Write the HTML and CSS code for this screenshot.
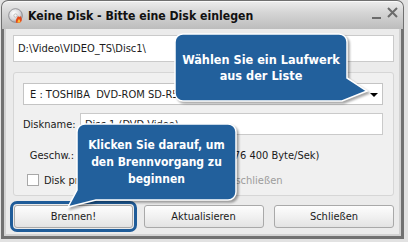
FILE: index.html
```html
<!DOCTYPE html>
<html lang="de">
<head>
<meta charset="utf-8">
<title>Keine Disk</title>
<link rel="stylesheet" href="styles.css">
</head>
<body>
<div class="window">
  <div class="titlebar">
    <svg class="app-icon" width="15" height="15" viewBox="0 0 16 16">
      <defs>
        <radialGradient id="cd" cx="0.4" cy="0.35" r="0.7">
          <stop offset="0" stop-color="#ffffff"/>
          <stop offset="0.6" stop-color="#d8d8dc"/>
          <stop offset="1" stop-color="#9a9aa0"/>
        </radialGradient>
      </defs>
      <circle cx="8" cy="8" r="7.3" fill="url(#cd)" stroke="#7d7d82" stroke-width="0.8"/>
      <circle cx="8" cy="8" r="1.8" fill="#f4f4f4" stroke="#909090" stroke-width="0.5"/>
      <path d="M8.6 15.6 C 7.6 12.8, 9.6 10.6, 10.8 8.2 C 11.3 10, 12.6 10, 12.9 8.4 C 15.4 10.6, 15.6 14.6, 12.4 15.6 Z" fill="#e4481a"/>
      <path d="M10.2 15.4 C 9.8 13.8, 11.2 12.6, 11.8 11.4 C 12.3 12.8, 13.6 13.4, 13.1 15.4 Z" fill="#ffbb33"/>
    </svg>
    <span class="title">Keine Disk - Bitte eine Disk einlegen</span>
    <div class="controls">
      <span class="minimize"></span>
      <svg class="close" width="11" height="11" viewBox="0 0 11 11">
        <path d="M1 1 L10 10 M10 1 L1 10" stroke="#6b6b6b" stroke-width="2"/>
      </svg>
    </div>
  </div>
  <div class="frame">
    <div class="field path">D:\Video\VIDEO_TS\Disc1\</div>
    <div class="group">
      <div class="combo">
        <span>E : TOSHIBA&nbsp; DVD-ROM SD-R5112 1031</span>
        <span class="arrow"></span>
      </div>
      <div class="row">
        <span class="lbl">Diskname:</span>
        <div class="field input">Disc 1 (DVD-Video)</div>
      </div>
      <div class="row speed">
        <span class="lbl">Geschw.:</span>
        <span class="speed-value">Maximal 8x (1 176 400 Byte/Sek)</span>
      </div>
      <div class="check-row">
        <span class="checkbox"></span>
        <span class="check-label">Disk prüfen<span class="disabled"> und nach dem Brennen abschließen</span></span>
      </div>
    </div>
    <div class="buttons">
      <button class="btn focused">Brennen!</button>
      <button class="btn">Aktualisieren</button>
      <button class="btn">Schließen</button>
    </div>
  </div>

  <svg class="bubble-shape bubble-shape-1" width="205" height="85" viewBox="0 0 205 85">
    <path d="M13 6 H169 A8 8 0 0 1 177 14 V50 L197 63 L172 73 H13 A8 8 0 0 1 5 65 V14 A8 8 0 0 1 13 6 Z"
          fill="#22609c" stroke="#ffffff" stroke-width="1.5"/>
  </svg>
  <div class="bubble-text bubble-text-1">Wählen Sie ein Laufwerk<br>aus der Liste</div>

  <svg class="bubble-shape bubble-shape-2" width="185" height="95" viewBox="0 0 185 95">
    <path d="M23 6 H166 A8 8 0 0 1 174 14 V74 A8 8 0 0 1 166 82 H34 L6 89 L15 72 V14 A8 8 0 0 1 23 6 Z"
          fill="#22609c" stroke="#ffffff" stroke-width="1.5"/>
  </svg>
  <div class="bubble-text bubble-text-2">Klicken Sie darauf, um<br>den Brennvorgang zu<br>beginnen</div>
</div>
</body>
</html>
```

FILE: styles.css
```css
* { box-sizing: border-box; }

body {
  margin: 0;
  background: #e2e2e2;
  font-family: "DejaVu Sans Condensed", "DejaVu Sans", sans-serif;
  font-size: 11px;
  color: #1a1a1a;
}

.window {
  position: relative;
  width: 403px;
  margin-left: 1px;
}

.titlebar {
  height: 29px;
  display: flex;
  align-items: center;
  padding: 0 0 0 6px;
  border: 1px solid #707070;
  border-bottom: none;
  border-radius: 7px 7px 0 0;
  background: linear-gradient(#ededed, #d6d6d6 40%, #bdbdbd);
  box-shadow: inset 0 1px 0 #fafafa;
}

.app-icon { display: block; margin-top: 1px; }

.title {
  margin-left: 5px;
  font-weight: bold;
  font-size: 12.2px;
  color: #111;
  flex: 1;
  padding-top: 1px;
}

.controls {
  display: flex;
  align-items: center;
  gap: 6px;
  padding-right: 5px;
  margin-top: -1px;
}

.minimize {
  display: block;
  width: 9px;
  height: 2px;
  background: #6b6b6b;
  margin-top: 6px;
}

.close { display: block; margin-top: -5px; }

.frame {
  height: 210px;
  border: 3px solid #717171;
  border-top: none;
  background: #ebebeb;
  box-shadow: inset 2px 0 0 #d2d2d2, inset -2px 0 0 #d2d2d2, inset 0 -2px 0 #d2d2d2;
  padding: 6px 7px 0 9px;
}

.field {
  background: #fff;
  border: 1px solid #cacaca;
  display: flex;
  align-items: center;
  white-space: nowrap;
  overflow: hidden;
}

.path {
  height: 27px;
  padding-left: 4px;
}

.group {
  margin-top: 10px;
  border: 1px solid #d6d6d6;
  border-radius: 3px;
  background: #f0f0f0;
  padding: 10px 10px 7px 9px;
  height: 124px;
}

.combo {
  height: 22px;
  background: #fff;
  border: 1px solid #c4c4c4;
  display: flex;
  align-items: center;
  justify-content: space-between;
  padding: 0 4px 0 6px;
  white-space: nowrap;
}

.arrow {
  width: 0;
  height: 0;
  border-left: 4px solid transparent;
  border-right: 4px solid transparent;
  border-top: 4px solid #000;
  margin-top: 1px;
}

.row {
  display: flex;
  align-items: center;
  margin-top: 8px;
  gap: 6px;
}

.lbl {
  width: 51px;
  text-align: right;
  white-space: nowrap;
}

.input {
  height: 22px;
  flex: 1;
  padding-left: 4px;
}

.speed {
  margin-top: 12px;
  height: 16px;
}

.speed-value { white-space: nowrap; margin-left: 74px; }

.check-row {
  display: flex;
  align-items: center;
  margin-top: 9px;
  height: 16px;
  padding-left: 4px;
  gap: 5px;
  white-space: nowrap;
}

.checkbox {
  width: 12px;
  height: 12px;
  border: 1px solid #a8a8a8;
  background: #fff;
}

.disabled { color: #9c9c9c; }

.buttons {
  display: flex;
  justify-content: space-between;
  margin-top: 9px;
  padding: 0 0 0 1px;
}

.btn {
  width: 120px;
  height: 23px;
  font-family: inherit;
  font-size: 11px;
  color: #1a1a1a;
  border: 1px solid #a9a9a9;
  border-radius: 3px;
  background: linear-gradient(#fdfdfd, #f1f1f1 50%, #e3e3e3);
  padding: 0;
}

.focused {
  width: 119px;
  outline: 3px solid #1f5c99;
  outline-offset: 1px;
}

.bubble-shape {
  position: absolute;
  filter: drop-shadow(2px 2px 1px rgba(0,0,0,0.35));
}

.bubble-shape-1 { left: 169px; top: 28px; }
.bubble-shape-2 { left: 61px; top: 118px; }

.bubble-text {
  position: absolute;
  display: flex;
  align-items: center;
  justify-content: center;
  text-align: center;
  color: #fff;
  font-weight: bold;
  font-size: 12px;
}

.bubble-text-1 {
  left: 174px;
  top: 34px;
  width: 172px;
  height: 67px;
  line-height: 16px;
  font-size: 12.6px;
}

.bubble-text-2 {
  left: 76px;
  top: 124px;
  width: 159px;
  height: 76px;
  line-height: 17px;
}
```
